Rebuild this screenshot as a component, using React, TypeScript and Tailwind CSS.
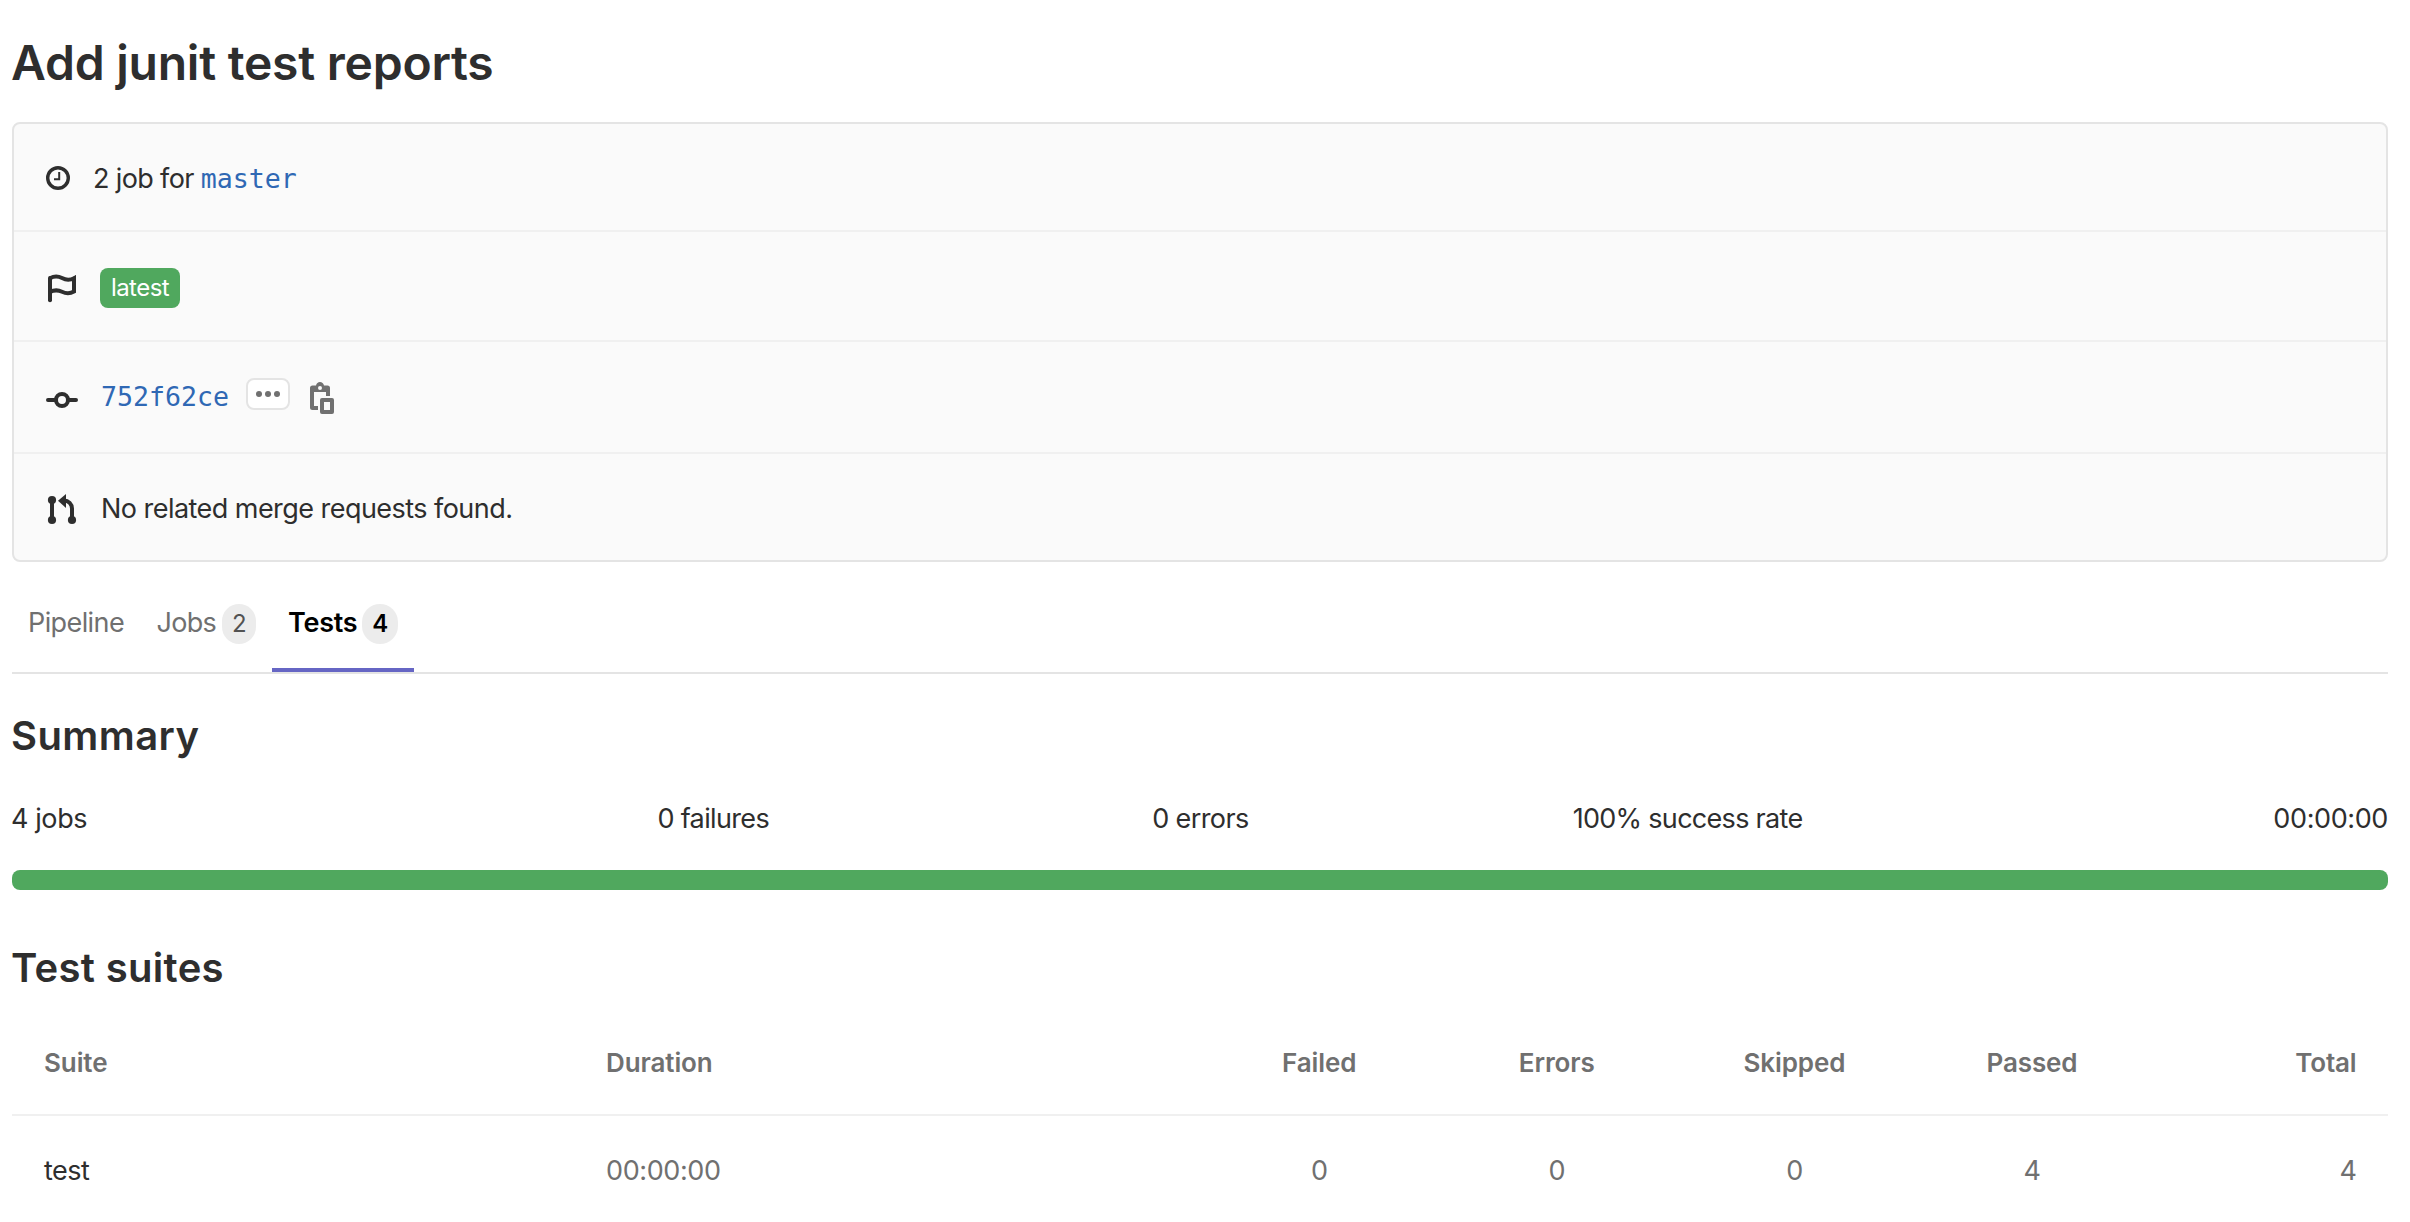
import type { ReactNode } from "react";

function ClockIcon() {
  return (
    <svg className="size-6 shrink-0" viewBox="0 0 24 24" fill="none" stroke="currentColor">
      <circle cx="12" cy="12" r="10.3" strokeWidth="3.4" />
      <path d="M13.2 6v7.2H8" strokeWidth="2" />
    </svg>
  );
}

function FlagIcon() {
  return (
    <svg className="size-8 shrink-0" viewBox="0 0 32 32" fill="none" stroke="currentColor" strokeWidth="4">
      <path d="M4 28.2V6" strokeLinecap="round" />
      <path d="M4 6.200C8.500 3.700 12.500 4.200 16 6c3.800 2 8 2.200 12 .2v13.400c-4 2.200-8.200 2-12 .2-3.600-1.800-7.600-2-12 .1" />
      <path d="M27.500 4.600 30 3.200v4h-2.500z" fill="currentColor" stroke="none" />
    </svg>
  );
}

function CommitIcon() {
  return (
    <svg className="size-8 shrink-0" viewBox="0 0 32 32" fill="none" stroke="currentColor" strokeWidth="4">
      <circle cx="16" cy="16" r="6" />
      <path d="M2 16h7M23 16h7" strokeLinecap="round" />
    </svg>
  );
}

function MergeRequestIcon() {
  return (
    <svg className="size-8 shrink-0" viewBox="0 0 32 32" fill="currentColor">
      <circle cx="6" cy="6" r="4.100" />
      <circle cx="6" cy="26" r="4.100" />
      <circle cx="26" cy="26" r="4.100" />
      <path d="M4 6h4v20H4z" />
      <path d="M12 6.700 20 0v14z" />
      <path d="M18 6.500c4.500 0 8 3.500 8 8V26" fill="none" stroke="currentColor" strokeWidth="4" />
    </svg>
  );
}

function CopyIcon() {
  return (
    <svg className="h-8 w-6 shrink-0" viewBox="0 0 24 32">
      <path
        fillRule="evenodd"
        fill="currentColor"
        d="M6 3.500C6.500 1.400 8 0 10 0s3.500 1.400 4 3.500h3.500A2.500 2.500 0 0 1 20 6v8h-4v-4H4v14h4v4H2.500A2.500 2.500 0 0 1 0 25.500V6a2.500 2.500 0 0 1 2.500-2.500zM10 4a2 2 0 1 0 0 4 2 2 0 0 0 0-4zM12 16h10a2 2 0 0 1 2 2v12a2 2 0 0 1-2 2H12a2 2 0 0 1-2-2V18a2 2 0 0 1 2-2zm2 4v8h6v-8z"
      />
    </svg>
  );
}

function Tab({ className, children }: { className: string; children: ReactNode }) {
  return <div className={`flex h-[110px] items-center border-b-4 pt-4 pl-4 ${className}`}>{children}</div>;
}

function CountBadge({ className, children }: { className: string; children: ReactNode }) {
  return (
    <span className={`mt-0.5 flex h-10 items-center justify-center rounded-full bg-[#ececec] text-[24px] ${className}`}>
      {children}
    </span>
  );
}

const counts = [
  { label: "Failed", value: 0 },
  { label: "Errors", value: 0 },
  { label: "Skipped", value: 0 },
  { label: "Passed", value: 4 },
];

const tableGrid = "grid grid-cols-[594px_594.400px_repeat(5,237.600px)] items-center";

export default function App() {
  return (
    <main className="h-[1222px] overflow-hidden bg-white pr-[22px] pl-3 font-['Inter',sans-serif] text-[27px] leading-10 tracking-[-0.54px] text-[#2e2e2e]">
      <h1 className="mb-[29px] -ml-px pt-[33px] text-[48px] leading-[60px] font-semibold tracking-[-0.24px]">
        Add junit test reports
      </h1>

      <section className="rounded-lg border-2 border-[#e4e4e4] bg-[#fafafa]">
        <div className="flex h-[108px] items-center border-b-2 border-[#f0f0f0] pt-0.5 pl-8">
          <ClockIcon />
          <span className="mt-0.5 ml-[23px] tracking-[-0.64px]">2 job for</span>
          <a className="mt-0.5 ml-[7px] font-['DejaVu_Sans_Mono',monospace] text-[26.600px] tracking-normal text-[#2f68b4]">master</a>
        </div>
        <div className="flex h-[110px] items-center border-b-2 border-[#f0f0f0] pt-1 pl-8">
          <FlagIcon />
          <span className="ml-[22px] h-10 w-20 rounded-lg bg-[#50a85e] text-center text-[24px] leading-10 text-white">
            latest
          </span>
        </div>
        <div className="flex h-[112px] items-center border-b-2 border-[#f0f0f0] pl-8">
          <div className="mt-1.5">
            <CommitIcon />
          </div>
          <a className="ml-[23px] font-['DejaVu_Sans_Mono',monospace] text-[26.600px] tracking-normal text-[#2f68b4]">752f62ce</a>
          <span className="mb-1.5 ml-[17px] flex h-8 w-11 items-center justify-center gap-[3px] rounded-lg border-2 border-[#e4e4e4] bg-white">
            <i className="size-1.5 rounded-full bg-[#707070]" />
            <i className="size-1.5 rounded-full bg-[#707070]" />
            <i className="size-1.5 rounded-full bg-[#707070]" />
          </span>
          <span className="mt-0.5 ml-5 text-[#707070]">
            <CopyIcon />
          </span>
        </div>
        <div className="flex h-[106px] items-center pt-0.5 pl-8">
          <div className="mt-1">
            <MergeRequestIcon />
          </div>
          <span className="mt-0.5 ml-[23px]">No related merge requests found.</span>
        </div>
      </section>

      <nav className="flex border-b-2 border-[#e4e4e4] text-[#707070]">
        <Tab className="w-[128.500px] border-transparent tracking-[-0.6px]">Pipeline</Tab>
        <Tab className="w-[131.500px] border-transparent tracking-[-0.7px]">
          Jobs
          <CountBadge className="ml-auto mr-4 w-[34px] text-[#525252]">2</CountBadge>
        </Tab>
        <Tab className="w-[142px] border-[#6666c4] font-semibold tracking-[-0.25px] text-black">
          Tests
          <CountBadge className="ml-auto mr-4 w-9">4</CountBadge>
        </Tab>
      </nav>

      <h4 className="mt-[37px] -ml-px text-[40px] leading-[50px] font-semibold tracking-[0.4px]">Summary</h4>
      <div className="mt-[38px] grid grid-cols-[457.600px_487.200px_487.200px_487.200px_1fr] text-center">
        <div className="-ml-px text-left tracking-[-0.4px]">4 jobs</div>
        <div className="tracking-[-0.65px]">0 failures</div>
        <div className="tracking-[-0.6px]">0 errors</div>
        <div className="tracking-[-0.7px]">100% success rate</div>
        <div className="text-right tracking-[-0.39px]">00:00:00</div>
      </div>
      <div className="mt-[31px] h-5 rounded-lg bg-[#50a85e]" />

      <h4 className="mt-[53px] -ml-px text-[40px] leading-[50px] font-semibold tracking-[0.32px]">Test suites</h4>
      <div className={`${tableGrid} h-[123px] border-b-2 border-[#f0f0f0] pt-[18px] text-[26px] font-semibold tracking-[-0.1px] text-[#707070]`}>
        <div className="pl-8">Suite</div>
        <div>Duration</div>
        {counts.map((c) => (
          <div key={c.label} className="text-center">{c.label}</div>
        ))}
        <div className="pr-8 text-right tracking-[-0.2px]">Total</div>
      </div>
      <div className={`${tableGrid} h-[106px] pt-1 text-[#707070]`}>
        <div className="pl-8 text-[#2e2e2e]">test</div>
        <div className="tracking-[-0.39px]">00:00:00</div>
        {counts.map((c) => (
          <div key={c.label} className="text-center">{c.value}</div>
        ))}
        <div className="pr-8 text-right">4</div>
      </div>
    </main>
  );
}
